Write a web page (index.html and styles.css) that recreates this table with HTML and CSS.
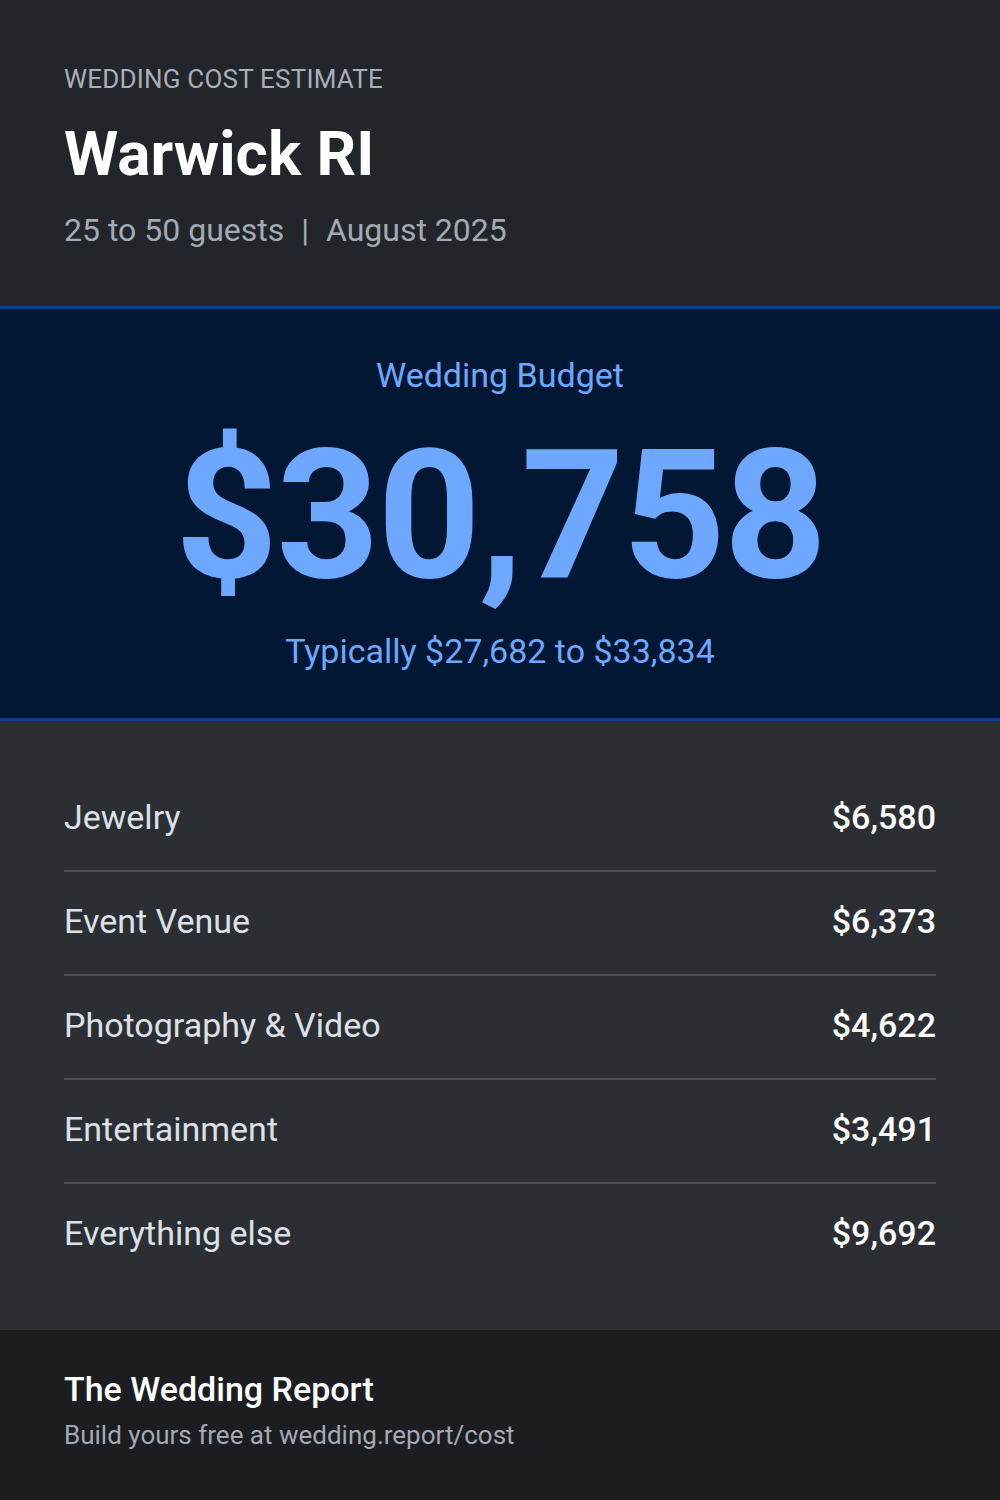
FILE: index.html
```html
<!DOCTYPE html>
<html lang="en">
<head>
<meta charset="utf-8">
<title>Wedding Cost Estimate – Warwick RI</title>
<link rel="stylesheet" href="styles.css">
</head>
<body>
<div class="card">
  <header class="hero">
    <div class="eyebrow">WEDDING COST ESTIMATE</div>
    <h1 class="title">Warwick RI</h1>
    <div class="meta">25 to 50 guests <span class="sep">|</span> August 2025</div>
  </header>
  <section class="budget">
    <div class="budget-label">Wedding Budget</div>
    <div class="budget-amount">$30,758</div>
    <div class="budget-range">Typically $27,682 to $33,834</div>
  </section>
  <section class="items">
    <div class="item"><span class="item-name">Jewelry</span><span class="item-value">$6,580</span></div>
    <div class="item"><span class="item-name">Event Venue</span><span class="item-value">$6,373</span></div>
    <div class="item"><span class="item-name">Photography &amp; Video</span><span class="item-value">$4,622</span></div>
    <div class="item"><span class="item-name">Entertainment</span><span class="item-value">$3,491</span></div>
    <div class="item"><span class="item-name">Everything else</span><span class="item-value">$9,692</span></div>
  </section>
  <footer class="footer">
    <div class="brand">The Wedding Report</div>
    <div class="cta">Build yours free at wedding.report/cost</div>
  </footer>
</div>
</body>
</html>
```
FILE: styles.css
```css
* { box-sizing: border-box; }
html, body { margin: 0; padding: 0; }
body {
  width: 1000px;
  height: 1500px;
  font-family: Roboto, "Liberation Sans", Arial, sans-serif;
  background: #1b1d20;
}
.card {
  width: 1000px;
  height: 1500px;
  display: flex;
  flex-direction: column;
}
.hero {
  background: #222529;
  height: 306px;
  padding: 64px 64px 0;
  display: flex;
  flex-direction: column;
}
.eyebrow {
  font-size: 26px;
  line-height: 31px;
  color: #a9b0b8;
  letter-spacing: 0.2px;
}
.title {
  margin: 25px 0 0;
  font-size: 62px;
  line-height: 68px;
  font-weight: 700;
  color: #ffffff;
}
.meta {
  margin-top: 21px;
  font-size: 32px;
  line-height: 42px;
  color: #a3aab3;
}
.sep { margin: 0 9px; }
.budget {
  background: #011733;
  border-top: 3px solid #0c3f8f;
  border-bottom: 3px solid #0c3f8f;
  height: 415px;
  padding-top: 46px;
  display: flex;
  flex-direction: column;
  align-items: center;
  color: #6ea8fe;
}
.budget-label {
  font-size: 34px;
  line-height: 41px;
}
.budget-amount {
  margin-top: 30px;
  font-size: 180px;
  line-height: 180px;
  font-weight: 700;
  letter-spacing: -2px;
}
.budget-range {
  margin-top: 25px;
  font-size: 34px;
  line-height: 40px;
}
.items {
  background: #2b2f33;
  height: 609px;
  padding: 47px 64px 0;
  display: flex;
  flex-direction: column;
}
.item {
  display: flex;
  justify-content: space-between;
  align-items: center;
  padding: 30px 0 34px;
  font-size: 34px;
  line-height: 38px;
  border-bottom: 2px solid #4a4f55;
}
.item:last-child { border-bottom: none; }
.item-name { color: #dde1e6; }
.item-value { color: #ffffff; font-weight: 500; }
.footer {
  background: #1b1d20;
  flex: 1;
  padding: 39px 64px 0;
}
.brand {
  font-size: 34px;
  line-height: 40px;
  font-weight: 500;
  color: #ffffff;
}
.cta {
  margin-top: 10px;
  font-size: 26px;
  line-height: 32px;
  color: #a3aab3;
}
```
